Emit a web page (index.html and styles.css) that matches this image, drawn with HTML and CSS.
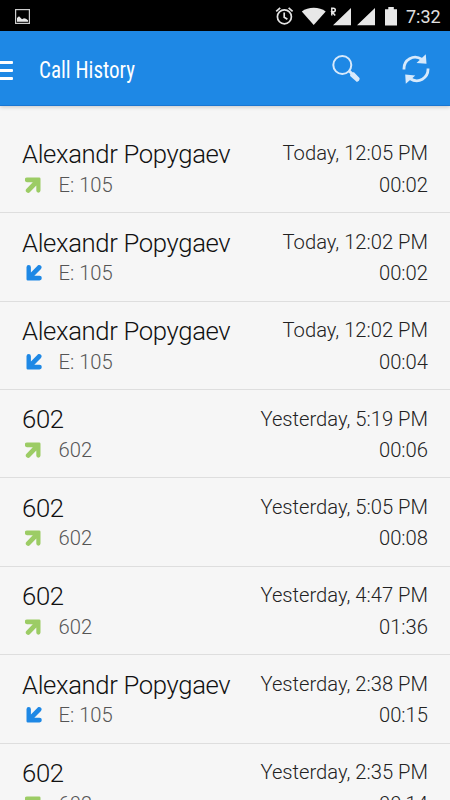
FILE: index.html
```html
<!DOCTYPE html>
<html lang="en">
<head>
    <meta charset="UTF-8">
    <meta name="viewport" content="width=device-width, initial-scale=1.0">
    <title>Call History</title>
    <link rel="stylesheet" href="styles.css">
</head>
<body>
<svg class="defs" width="0" height="0">
    <symbol id="out" viewBox="0 0 16 16">
        <path d="M2 .5H14.200a1.300 1.300 0 0 1 1.300 1.300V13.600a2 2 0 0 1-4.200 0V8.600L5 14.900a2.100 2.100 0 0 1-3.700-2.900L7.800 5.200H2.200A2.200 2.200 0 0 1 2 .5z"/>
    </symbol>
    <symbol id="in" viewBox="0 0 16 16">
        <path d="M.5 2.300a2.200 2.200 0 0 1 4.400 0V7.500L11.300 1a2.100 2.100 0 0 1 3.700 2.900L8.300 10.800h5.200a2.300 2.300 0 0 1 0 4.600H1.800A1.300 1.300 0 0 1 .5 14.200z"/>
    </symbol>
</svg>

<div class="statusbar">
    <svg class="picture" width="15" height="15" viewBox="0 0 15 15">
        <rect x=".6" y=".6" width="13.800" height="13.800" fill="none" stroke="#ccc" stroke-width="1.200"/>
        <path d="M2 12.800V9l2-1.800 2 2 1 1 2-1 2 .5 2 1.500v1.600z" fill="#e8e8e8"/>
    </svg>
    <svg class="system" width="125" height="20" viewBox="0 0 125 20">
        <g fill="none" stroke="#e4e4e4" stroke-width="1.700">
            <circle cx="9.400" cy="10.800" r="7"/>
            <path d="M9.200 6.500v4.700l3.200 2M1.200 5.300l4-3.500M13.600 1.800l4 3.500"/>
        </g>
        <g fill="#e8e8e8">
            <path d="M26.800 5.500C33 .6 44.500.6 50.700 5.500L38.700 19z"/>
            <path d="M58 19.200L76 2v17.200zM82 19.200L100 2v17.200z"/>
            <path d="M110 3.200h3.300V1h5.500v2.200h3.200v16.200h-12z"/>
        </g>
        <path d="M56.800 9.500V2.200h1.500q2 0 2 1.800t-2 1.800h-1.300l3.200 3.700" fill="none" stroke="#e8e8e8" stroke-width="1.500"/>
    </svg>
    <span class="clock">7:32</span>
</div>

<div class="appbar">
    <div class="menu"><i></i><i></i><i></i></div>
    <h1>Call History</h1>
    <svg class="search" width="28" height="28" viewBox="0 0 28 28">
        <circle cx="10.300" cy="10" r="9" fill="none" stroke="#d7e9fb" stroke-width="2"/>
        <path d="M16.200 17l2-2 2.300 2.200 1.500.1 5.500 5.800q.8 2.800-2.600 4l-6.800-6.200.1-1.900z" fill="#d7e9fb"/>
    </svg>
    <svg class="refresh" width="28" height="30" viewBox="0 0 28 30">
        <path d="M2 15.500C1.500 6 11.500-.2 20 5.500M26 14.500C26.500 24 16.500 30.200 8 24.500" fill="none" stroke="#d7e9fb" stroke-width="2.800"/>
        <path d="M23.800.3L24.500 9.800 14.500 9zM3.800 29.700L3.200 20.500 13.300 21.500z" fill="#d7e9fb"/>
    </svg>
</div>

<ul class="calls">
    <li>
        <div class="line"><span class="name">Alexandr Popygaev</span><span class="date">Today, 12:05 PM</span></div>
        <div class="line"><svg class="arrow out"><use href="#out"/></svg><span class="number">E: 105</span><span class="time">00:02</span></div>
    </li>
    <li>
        <div class="line"><span class="name">Alexandr Popygaev</span><span class="date">Today, 12:02 PM</span></div>
        <div class="line"><svg class="arrow in"><use href="#in"/></svg><span class="number">E: 105</span><span class="time">00:02</span></div>
    </li>
    <li>
        <div class="line"><span class="name">Alexandr Popygaev</span><span class="date">Today, 12:02 PM</span></div>
        <div class="line"><svg class="arrow in"><use href="#in"/></svg><span class="number">E: 105</span><span class="time">00:04</span></div>
    </li>
    <li>
        <div class="line"><span class="name">602</span><span class="date">Yesterday, 5:19 PM</span></div>
        <div class="line"><svg class="arrow out"><use href="#out"/></svg><span class="number">602</span><span class="time">00:06</span></div>
    </li>
    <li>
        <div class="line"><span class="name">602</span><span class="date">Yesterday, 5:05 PM</span></div>
        <div class="line"><svg class="arrow out"><use href="#out"/></svg><span class="number">602</span><span class="time">00:08</span></div>
    </li>
    <li>
        <div class="line"><span class="name">602</span><span class="date">Yesterday, 4:47 PM</span></div>
        <div class="line"><svg class="arrow out"><use href="#out"/></svg><span class="number">602</span><span class="time">01:36</span></div>
    </li>
    <li>
        <div class="line"><span class="name">Alexandr Popygaev</span><span class="date">Yesterday, 2:38 PM</span></div>
        <div class="line"><svg class="arrow in"><use href="#in"/></svg><span class="number">E: 105</span><span class="time">00:15</span></div>
    </li>
    <li>
        <div class="line"><span class="name">602</span><span class="date">Yesterday, 2:35 PM</span></div>
        <div class="line"><svg class="arrow out"><use href="#out"/></svg><span class="number">602</span><span class="time">00:14</span></div>
    </li>
</ul>
</body>
</html>
```

FILE: styles.css
```css
body {
    margin: 0;
    height: 800px;
    overflow: hidden;
    display: flex;
    flex-direction: column;
    background: #f6f6f6;
    font-family: Roboto, sans-serif;
}
.defs {
    display: none;
}
.statusbar {
    flex: none;
    height: 31px;
    box-sizing: border-box;
    padding: 0 10px 0 15px;
    display: flex;
    align-items: center;
    background: #000;
}
.picture {
    margin-top: 1px;
}
.system {
    margin-left: auto;
}
.clock {
    width: 34px;
    margin-left: 6px;
    margin-top: 2px;
    color: #e0e0e0;
    font-size: 18px;
    line-height: 20px;
    text-align: right;
}
.appbar {
    flex: none;
    height: 75px;
    box-sizing: border-box;
    padding-right: 20.500px;
    display: flex;
    align-items: center;
    background: #1e88e5;
    border-bottom: 1px solid #1976d2;
    box-shadow: 0 1px 4px rgba(0, 0, 0, 0.2);
}
.menu {
    width: 13px;
    margin-top: 4px;
    display: flex;
    flex-direction: column;
    gap: 5px;
}
.menu i {
    height: 3px;
    border-radius: 0 1px 1px 0;
    background: #fff;
}
h1 {
    margin: 4px 0 0 26px;
    color: #fff;
    font-family: "Roboto Condensed", Roboto, sans-serif;
    font-size: 23px;
    font-weight: 400;
    font-stretch: 75%;
    white-space: nowrap;
    transform: scaleX(0.915);
    transform-origin: left;
}
.search {
    margin-left: auto;
    margin-top: 1px;
}
.refresh {
    margin-left: 42px;
    margin-top: 1px;
}
.calls {
    flex: none;
    margin: 0;
    padding: 18.800px 0 0;
    list-style: none;
    font-size: 20.200px;
    font-weight: 300;
}
.calls li {
    height: 88.400px;
    box-sizing: border-box;
    padding: 15px 22px 0;
    border-bottom: 1px solid #dedede;
}
.line {
    height: 31px;
    display: flex;
    line-height: 30px;
    white-space: nowrap;
}
.line + .line {
    margin-top: -1px;
}
.name {
    margin-top: -0.600px;
    color: #111;
    font-size: 25.700px;
    letter-spacing: -0.36px;
}
.date,
.time {
    margin-left: auto;
    color: #222;
}
.date {
    margin-top: -1.400px;
}
.number {
    margin-left: 17.500px;
    color: #555;
}
.arrow {
    width: 16px;
    height: 16px;
    margin: 7px 0 0 3px;
}
.out {
    fill: #9ccc65;
}
.in {
    margin-left: 4px;
    margin-right: -1px;
    fill: #1e88e5;
}
```
